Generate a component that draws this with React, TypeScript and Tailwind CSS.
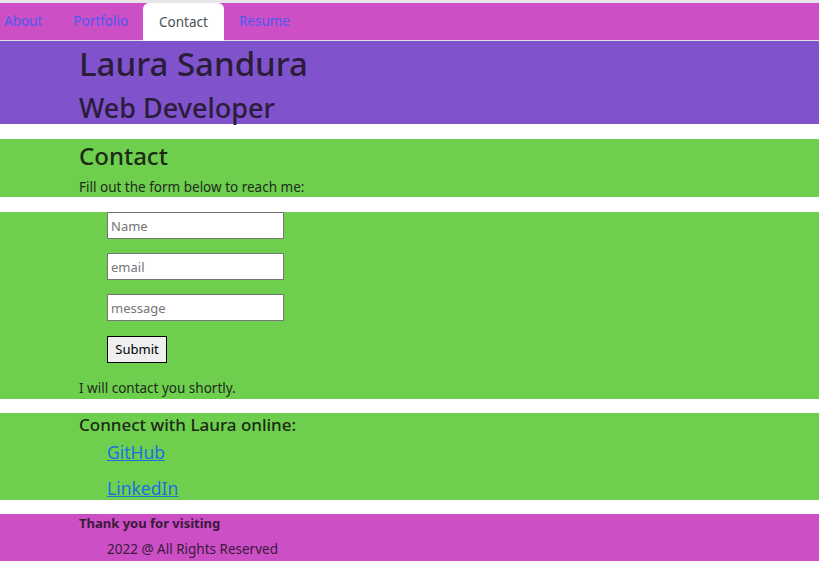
import React from 'react';

const tabs = ['About', 'Portfolio', 'Contact', 'Resume'];

export default function App() {
  return (
    <div className="min-h-[564px] bg-white font-['Noto_Sans',sans-serif] text-[#212529]">
      <div className="h-[3px] bg-[#e9e3ea]" />
      <nav className="flex h-[38px] items-end border-b border-[#dee2e6] bg-[#cc4fc6] pl-[4px]">
        {tabs.map((t, i) => (
          <div
            key={t}
            className={
              t === 'Contact'
                ? 'mb-[-1px] flex h-[38px] items-center rounded-t-[6px] bg-white px-[16px] text-[13.5px] text-[#495057]'
                : i === 0
                ? 'flex h-[37px] items-center pr-[16px] text-[13.5px] text-[#4a5cf0]'
                : 'flex h-[37px] items-center px-[15px] text-[13.5px] text-[#4a5cf0]'
            }
          >
            {t}
          </div>
        ))}
      </nav>

      <header className="h-[83px] bg-[#8052cc] pl-[79px] text-[#2a1d3a]">
        <h1 className="text-[33px] font-medium leading-[46px]">Laura Sandura</h1>
        <h2 className="mt-[6px] text-[27px] font-medium leading-[30px]">Web Developer</h2>
      </header>

      <section className="mt-[15px] h-[58px] bg-[#6ecf4e] pl-[79px]">
        <h2 className="text-[24px] font-medium leading-[34px] text-[#1c2a16]">Contact</h2>
        <p className="mt-[4px] text-[13.5px] leading-[20px] text-[#1f2a1a]">Fill out the form below to reach me:</p>
      </section>

      <section className="mt-[15px] h-[187px] bg-[#6ecf4e]">
        <form className="flex flex-col gap-[14px] pl-[107px]">
          <input placeholder="Name" className="h-[27px] w-[177px] border border-[#767676] bg-white px-[3px] text-[13px] placeholder:text-[#757575]" />
          <input placeholder="email" className="h-[27px] w-[177px] border border-[#767676] bg-white px-[3px] text-[13px] placeholder:text-[#757575]" />
          <input placeholder="message" className="h-[27px] w-[177px] border border-[#767676] bg-white px-[3px] text-[13px] placeholder:text-[#757575]" />
          <button type="button" className="mt-[1px] h-[27px] w-[60px] border border-black bg-[#efefef] text-[13px] text-black">
            Submit
          </button>
        </form>
        <p className="mt-[15px] pl-[79px] text-[13.5px] leading-[20px] text-[#1f2a1a]">I will contact you shortly.</p>
      </section>

      <section className="mt-[14px] h-[87px] bg-[#6ecf4e] pl-[79px]">
        <h3 className="text-[17px] font-medium leading-[23px] text-[#1c2a16]">Connect with Laura online:</h3>
        <ul className="flex flex-col gap-[10px] pl-[28px] pt-[3px]">
          <li><a href="#" className="text-[17.5px] leading-[26px] text-[#1d6fe0] underline">GitHub</a></li>
          <li><a href="#" className="text-[17.5px] leading-[26px] text-[#1d6fe0] underline">LinkedIn</a></li>
        </ul>
      </section>

      <footer className="mt-[14px] h-[47px] bg-[#cc4fc6] pl-[79px] text-[#3a1a3a]">
        <p className="text-[13px] font-bold leading-[18px]">Thank you for visiting</p>
        <p className="mt-[8px] pl-[28px] text-[13.5px] leading-[18px]">2022 @ All Rights Reserved</p>
      </footer>
    </div>
  );
}
